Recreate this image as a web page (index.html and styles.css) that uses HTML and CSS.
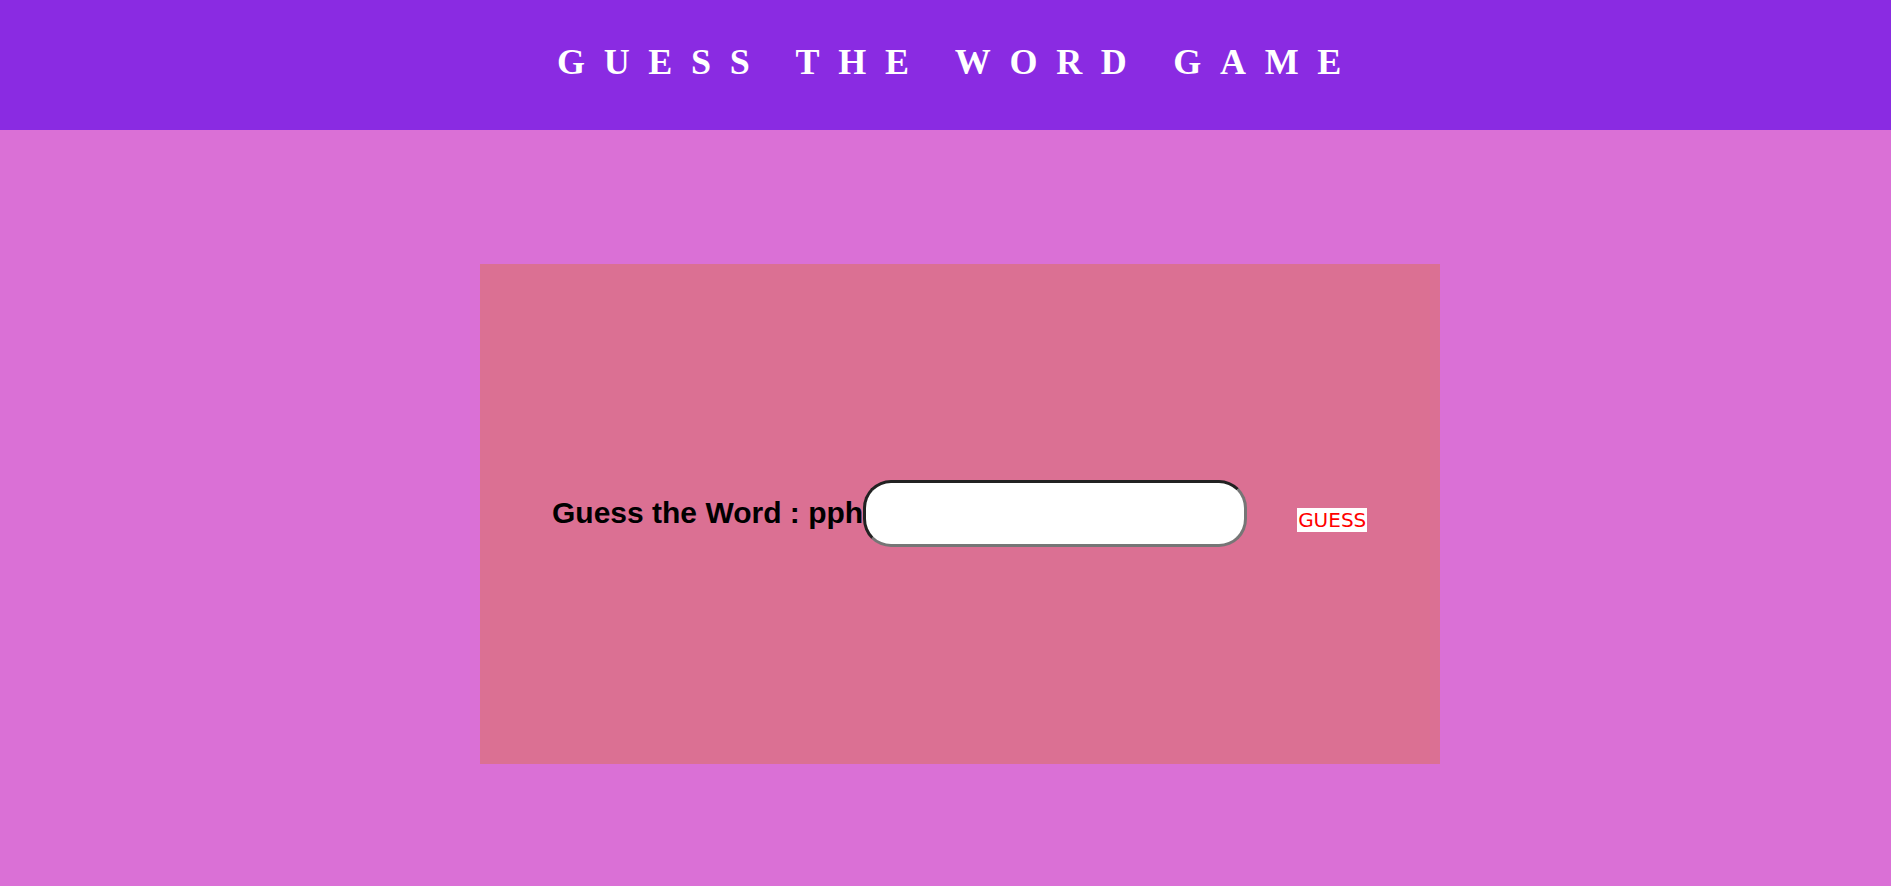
FILE: index.html
```html
<!DOCTYPE html>
<html lang="en">
<head>
<meta charset="utf-8">
<title>Guess the Word Game</title>
<link rel="stylesheet" href="styles.css">
</head>
<body>
<header class="topbar">
  <h1 class="title">GUESS THE WORD GAME</h1>
</header>
<main class="stage">
  <section class="card">
    <label class="prompt" for="guess">Guess the Word : pph</label><input id="guess" class="guess-input" type="text"><button class="guess-btn" type="button">GUESS</button>
  </section>
</main>
</body>
</html>
```
FILE: styles.css
```css
html, body {
  margin: 0;
  padding: 0;
}

body {
  background: #da70d6;
}

.topbar {
  background: #8a2be2;
  height: 130px;
  box-sizing: border-box;
  padding: 42px 0 0 26px;
  text-align: center;
}

.title {
  margin: 0;
  font-family: "Liberation Serif", "Times New Roman", serif;
  font-weight: bold;
  font-size: 36px;
  line-height: 40px;
  letter-spacing: 18.7px;
  color: #ffffff;
}

.stage {
  padding: 134px 0 0 480px;
}

.card {
  width: 960px;
  height: 500px;
  box-sizing: border-box;
  background: #db7093;
  display: flex;
  align-items: flex-start;
  padding: 216px 0 0 72px;
}

.prompt {
  flex: none;
  margin-top: 16px;
  font-family: "Liberation Sans", Arial, sans-serif;
  font-weight: bold;
  font-size: 30px;
  line-height: 34px;
  color: #000000;
  white-space: nowrap;
}

.guess-input {
  flex: none;
  width: 384px;
  height: 67px;
  box-sizing: border-box;
  margin: 0;
  padding: 1px 2px;
  background: #ffffff;
  border-width: 3px;
  border-style: solid;
  border-color: #222222 #767676 #767676 #222222;
  border-radius: 28px;
  outline: none;
}

.guess-btn {
  flex: none;
  margin: 28px 0 0 50px;
  padding: 0 1px;
  border: 0;
  border-radius: 0;
  background: #ffffff;
  color: #ff0000;
  font-family: "DejaVu Sans", Verdana, sans-serif;
  font-size: 20px;
  line-height: 24px;
}
```
